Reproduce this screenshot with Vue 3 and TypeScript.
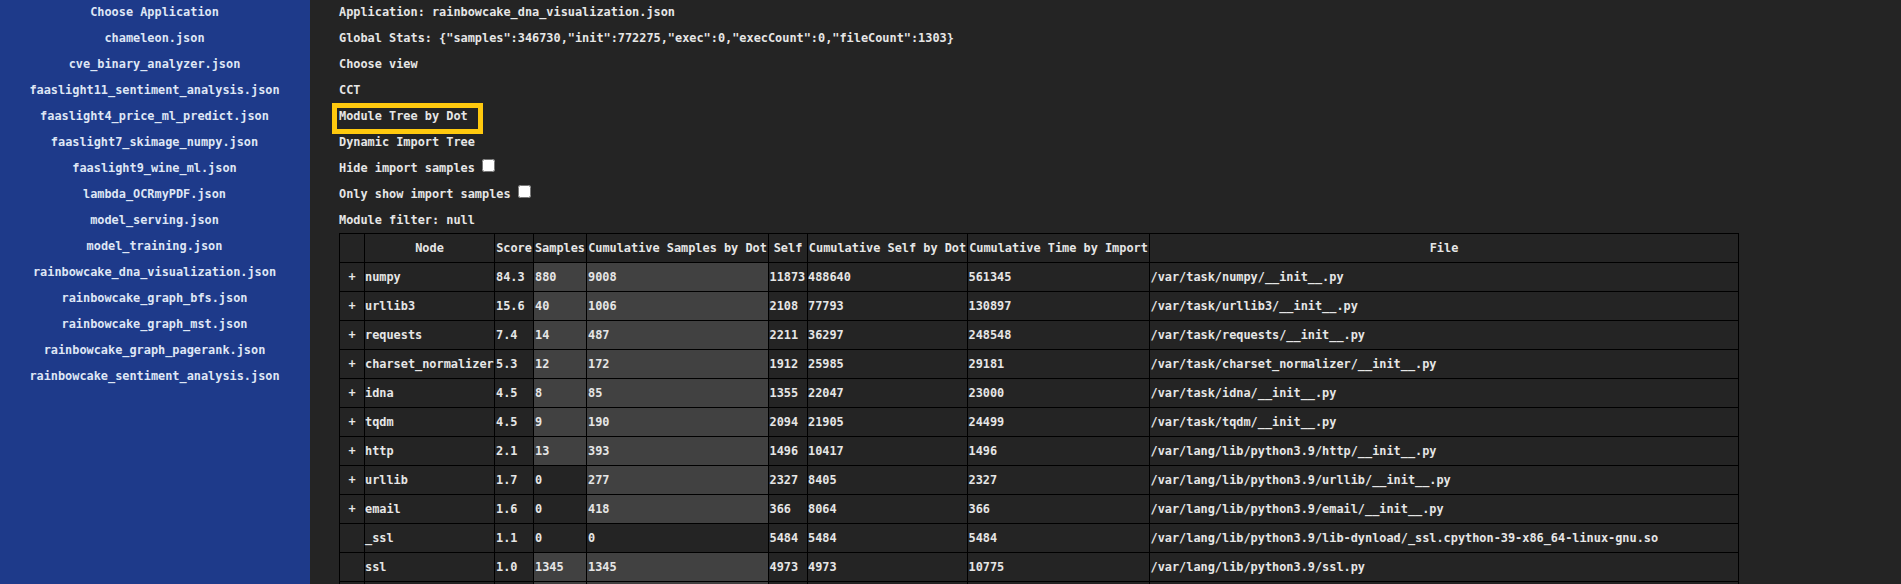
<script setup lang="ts">
import { ref } from 'vue'

interface ModuleRow {
  node: string
  score: string
  samples: number
  cumSamples: number
  self: number
  cumSelf: number
  cumTime: number
  file: string
  expandable: boolean
}

const applications: string[] = [
  'chameleon.json',
  'cve_binary_analyzer.json',
  'faaslight11_sentiment_analysis.json',
  'faaslight4_price_ml_predict.json',
  'faaslight7_skimage_numpy.json',
  'faaslight9_wine_ml.json',
  'lambda_OCRmyPDF.json',
  'model_serving.json',
  'model_training.json',
  'rainbowcake_dna_visualization.json',
  'rainbowcake_graph_bfs.json',
  'rainbowcake_graph_mst.json',
  'rainbowcake_graph_pagerank.json',
  'rainbowcake_sentiment_analysis.json',
]

const selected = ref('rainbowcake_dna_visualization.json')
const stats = { samples: 346730, init: 772275, exec: 0, execCount: 0, fileCount: 1303 }
const views: string[] = ['CCT', 'Module Tree by Dot', 'Dynamic Import Tree']
const activeView = ref('Module Tree by Dot')
const hideImports = ref(false)
const onlyImports = ref(false)

const headers: string[] = [
  '',
  'Node',
  'Score',
  'Samples',
  'Cumulative Samples by Dot',
  'Self',
  'Cumulative Self by Dot',
  'Cumulative Time by Import',
  'File',
]

function row(
  node: string, score: string, samples: number, cumSamples: number,
  self: number, cumSelf: number, cumTime: number, file: string, expandable = true,
): ModuleRow {
  return { node, score, samples, cumSamples, self, cumSelf, cumTime, file, expandable }
}

const rows: ModuleRow[] = [
  row('numpy', '84.3', 880, 9008, 11873, 488640, 561345, '/var/task/numpy/__init__.py'),
  row('urllib3', '15.6', 40, 1006, 2108, 77793, 130897, '/var/task/urllib3/__init__.py'),
  row('requests', '7.4', 14, 487, 2211, 36297, 248548, '/var/task/requests/__init__.py'),
  row('charset_normalizer', '5.3', 12, 172, 1912, 25985, 29181, '/var/task/charset_normalizer/__init__.py'),
  row('idna', '4.5', 8, 85, 1355, 22047, 23000, '/var/task/idna/__init__.py'),
  row('tqdm', '4.5', 9, 190, 2094, 21905, 24499, '/var/task/tqdm/__init__.py'),
  row('http', '2.1', 13, 393, 1496, 10417, 1496, '/var/lang/lib/python3.9/http/__init__.py'),
  row('urllib', '1.7', 0, 277, 2327, 8405, 2327, '/var/lang/lib/python3.9/urllib/__init__.py'),
  row('email', '1.6', 0, 418, 366, 8064, 366, '/var/lang/lib/python3.9/email/__init__.py'),
  row('_ssl', '1.1', 0, 0, 5484, 5484, 5484, '/var/lang/lib/python3.9/lib-dynload/_ssl.cpython-39-x86_64-linux-gnu.so', false),
  row('ssl', '1.0', 1345, 1345, 4973, 4973, 10775, '/var/lang/lib/python3.9/ssl.py', false),
]
</script>

<template>
  <div class="page">
    <nav class="sidebar">
      <div class="line">Choose Application</div>
      <div v-for="app in applications" :key="app" class="line" @click="selected = app">{{ app }}</div>
    </nav>
    <main class="content">
      <div class="line">Application: {{ selected }}</div>
      <div class="line">Global Stats: {{ JSON.stringify(stats) }}</div>
      <div class="line">Choose view</div>
      <div v-for="view in views" :key="view" class="line view" @click="activeView = view">
        {{ view }}<span v-if="view === activeView" class="marker"></span>
      </div>
      <label class="line option"><span>Hide import samples </span><input v-model="hideImports" type="checkbox" /></label>
      <label class="line option"><span>Only show import samples </span><input v-model="onlyImports" type="checkbox" /></label>
      <div class="line">Module filter: null</div>
      <table class="modules">
        <thead>
          <tr>
            <th v-for="(h, i) in headers" :key="i">{{ h }}</th>
          </tr>
        </thead>
        <tbody>
          <tr v-for="r in rows" :key="r.node">
            <td class="toggle">{{ r.expandable ? '+' : '' }}</td>
            <td>{{ r.node }}</td>
            <td>{{ r.score }}</td>
            <td :class="{ hot: r.samples > 0 }">{{ r.samples }}</td>
            <td :class="{ hot: r.cumSamples > 0 }">{{ r.cumSamples }}</td>
            <td>{{ r.self }}</td>
            <td>{{ r.cumSelf }}</td>
            <td>{{ r.cumTime }}</td>
            <td>{{ r.file }}</td>
          </tr>
          <tr>
            <td v-for="n in 9" :key="n" :class="{ hot: n === 4 || n === 5 }"></td>
          </tr>
        </tbody>
      </table>
    </main>
  </div>
</template>

<style>
html,
body {
  margin: 0;
  background: #242424;
  overflow: hidden;
}
</style>

<style scoped>
.page {
  display: flex;
  height: 584px;
  overflow: hidden;
  background: #242424;
  color: #e6e6e6;
  font-family: Consolas, 'DejaVu Sans Mono', 'Liberation Mono', monospace;
  font-size: 11.88px;
  font-weight: 700;
  white-space: nowrap;
}
.sidebar {
  box-sizing: border-box;
  flex: none;
  width: 310px;
  padding-right: 1px;
  background: #1e3a8a;
  color: #dfe6f5;
  text-align: center;
}
.content {
  flex: 1;
  padding-left: 29px;
}
.line {
  height: 26px;
  line-height: 24px;
}
.view {
  position: relative;
  width: max-content;
}
.marker {
  position: absolute;
  box-sizing: border-box;
  left: -7px;
  top: -1px;
  width: 151px;
  height: 31px;
  border: 5px solid #ffc90e;
}
.option {
  display: flex;
  width: max-content;
}
.option span {
  white-space: pre;
}
.option input {
  width: 13px;
  height: 13px;
  margin: 3px 0 0;
}
.modules,
.modules thead,
.modules tbody {
  display: block;
}
.modules {
  width: 1400px;
  margin-top: -1px;
  border-top: 1px solid #000;
}
.modules tr {
  display: grid;
  grid-template-columns: 25px 130px 39px 53px 182px 39px 160px 182px 589px;
  box-sizing: border-box;
  height: 29px;
  border-right: 1px solid #000;
}
.modules th,
.modules td {
  box-sizing: border-box;
  min-width: 0;
  padding: 0 0 0 1px;
  border-left: 1px solid #000;
  border-bottom: 1px solid #000;
  line-height: 28px;
  text-align: left;
}
.modules th {
  padding: 0;
  text-align: center;
}
.modules td:nth-child(2),
.modules td:nth-child(7) {
  padding-left: 0;
}
.modules td:nth-child(6),
.modules td:nth-child(8),
.modules td:nth-child(9) {
  padding-left: 0.5px;
}
.modules .toggle {
  padding: 0;
  text-align: center;
}
.modules .hot {
  background: #414141;
}
</style>
